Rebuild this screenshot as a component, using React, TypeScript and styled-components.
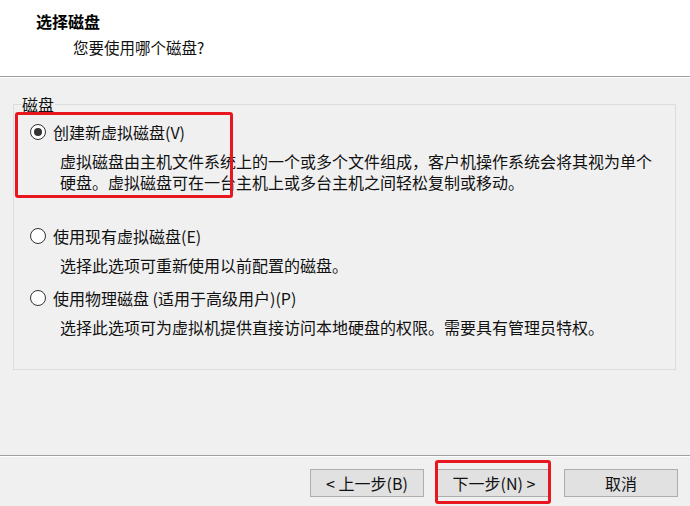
import styled, { createGlobalStyle } from "styled-components";

const Global = createGlobalStyle`
  html, body {
    margin: 0;
    padding: 0;
    background: #f0f0f0;
  }
  body {
    font-family: "Noto Sans CJK SC", "Noto Sans", sans-serif;
    color: #111;
  }
`;

const Window = styled.div`
  position: relative;
  width: 690px;
  height: 506px;
  display: flex;
  flex-direction: column;
  background: #f0f0f0;
  overflow: hidden;
`;

const Header = styled.div`
  height: 77px;
  background: #fff;
  border-bottom: 1px solid #a0a0a0;
  box-shadow: 0 1px 0 #fff;
  padding-left: 36px;
  box-sizing: border-box;
`;

const Title = styled.div`
  margin-top: 11px;
  font-size: 16px;
  line-height: 20px;
  font-weight: 700;
  color: #000;
`;

const Subtitle = styled.div`
  margin-top: 6px;
  margin-left: 37px;
  font-size: 15.5px;
  line-height: 20px;
`;

const Main = styled.div`
  flex: 1;
  padding: 0 14px 0 13px;
`;

const Group = styled.fieldset`
  margin: 17px 0 0;
  padding: 0 8px 29px;
  height: 276px;
  box-sizing: border-box;
  border: 1px solid #dcdcdc;
  border-radius: 0;
`;

const GroupLabel = styled.legend`
  padding: 0 1px 0 0;
  font-size: 16px;
  line-height: 20px;
`;

const Options = styled.div`
  padding-left: 8px;
  padding-top: 8px;
  display: flex;
  flex-direction: column;
`;

const Option = styled.div<{ $gap: number }>`
  margin-top: ${(p) => p.$gap}px;
`;

const OptionRow = styled.div`
  display: flex;
  align-items: center;
  gap: 7px;
  font-size: 16px;
  line-height: 20px;
`;

const Radio = styled.span<{ $checked?: boolean }>`
  width: 16px;
  height: 16px;
  box-sizing: border-box;
  border-radius: 50%;
  border: 1.5px solid #333;
  background: #fff;
  display: flex;
  align-items: center;
  justify-content: center;
  &::after {
    content: "";
    display: ${(p) => (p.$checked ? "block" : "none")};
    width: 8px;
    height: 8px;
    border-radius: 50%;
    background: #333;
  }
`;

const Desc = styled.div`
  margin: 9px 0 0 30px;
  font-size: 16px;
  line-height: 21px;
`;

const Footer = styled.div`
  height: 51px;
  box-sizing: border-box;
  border-top: 1px solid #a0a0a0;
  box-shadow: inset 0 1px 0 #fff;
  display: flex;
  justify-content: flex-end;
  align-items: flex-start;
  gap: 13px;
  padding: 13px 12px 0 0;
`;

const Button = styled.button`
  width: 114px;
  height: 28px;
  background: #e1e1e1;
  border: 1px solid #adadad;
  border-radius: 0;
  font-family: inherit;
  font-size: 16px;
  line-height: 20px;
  color: #111;
  padding: 0;
`;

const Highlight = styled.div<{ $x: number; $y: number; $w: number; $h: number }>`
  position: absolute;
  left: ${(p) => p.$x}px;
  top: ${(p) => p.$y}px;
  width: ${(p) => p.$w}px;
  height: ${(p) => p.$h}px;
  box-sizing: border-box;
  border: 3px solid #e8161e;
  border-radius: 3px;
  pointer-events: none;
`;

const options = [
  {
    label: "创建新虚拟磁盘(V)",
    checked: true,
    gap: 0,
    desc: [
      "虚拟磁盘由主机文件系统上的一个或多个文件组成，客户机操作系统会将其视为单个",
      "硬盘。虚拟磁盘可在一台主机上或多台主机之间轻松复制或移动。",
    ],
  },
  {
    label: "使用现有虚拟磁盘(E)",
    checked: false,
    gap: 33,
    desc: ["选择此选项可重新使用以前配置的磁盘。"],
  },
  {
    label: "使用物理磁盘 (适用于高级用户)(P)",
    checked: false,
    gap: 12,
    desc: ["选择此选项可为虚拟机提供直接访问本地硬盘的权限。需要具有管理员特权。"],
  },
];

const App = () => {
  return (
    <Window>
      <Global />
      <Header>
        <Title>选择磁盘</Title>
        <Subtitle>您要使用哪个磁盘?</Subtitle>
      </Header>
      <Main>
        <Group>
          <GroupLabel>磁盘</GroupLabel>
          <Options>
            {options.map((o) => (
              <Option key={o.label} $gap={o.gap}>
                <OptionRow>
                  <Radio $checked={o.checked} />
                  {o.label}
                </OptionRow>
                <Desc>
                  {o.desc.map((line) => (
                    <div key={line}>{line}</div>
                  ))}
                </Desc>
              </Option>
            ))}
          </Options>
        </Group>
      </Main>
      <Footer>
        <Button>&lt; 上一步(B)</Button>
        <Button>下一步(N) &gt;</Button>
        <Button>取消</Button>
      </Footer>
      <Highlight $x={15} $y={112} $w={218} $h={86} />
      <Highlight $x={435} $y={460} $w={116} $h={44} />
    </Window>
  );
};

export default App;
